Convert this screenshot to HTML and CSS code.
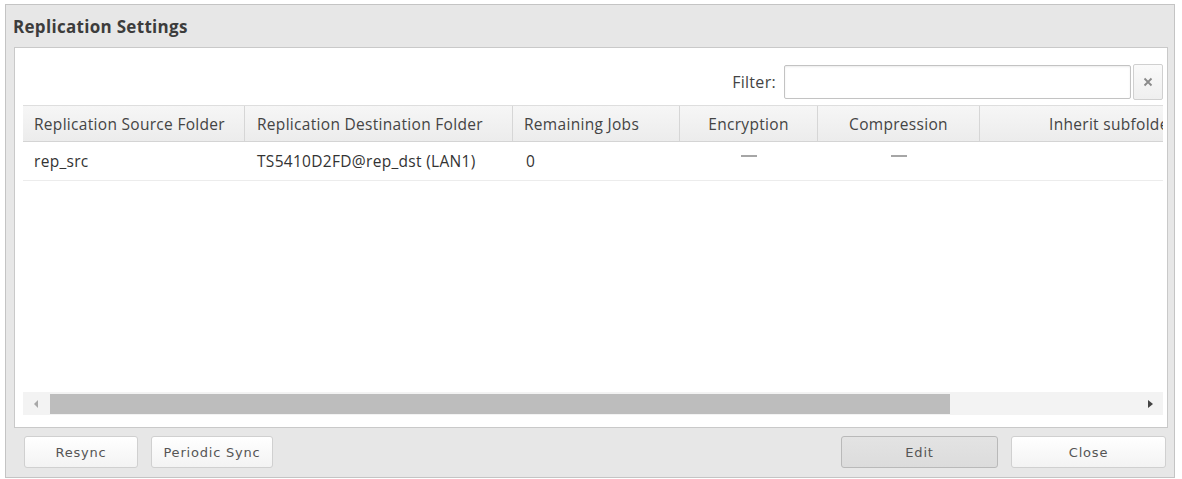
FILE: index.html
```html
<!DOCTYPE html>
<html>
<head>
<meta charset="utf-8">
<link rel="stylesheet" href="styles.css">
</head>
<body>
<div class="window">
  <div class="title">Replication Settings</div>
  <div class="panel">
    <div class="filter-row">
      <span class="filter-label">Filter:</span>
      <input class="filter-input" type="text">
      <button class="clear-btn"><svg width="10" height="10" viewBox="0 0 10 10"><path d="M1.5 1.5 L8.5 8.5 M8.5 1.5 L1.5 8.5" stroke="#8a8a8a" stroke-width="1.8" fill="none"/></svg></button>
    </div>
    <div class="grid">
      <div class="head">
        <div class="hc c1">Replication Source Folder</div>
        <div class="hc c2">Replication Destination Folder</div>
        <div class="hc c3">Remaining Jobs</div>
        <div class="hc c4 center">Encryption</div>
        <div class="hc c5 center">Compression</div>
        <div class="hc c6 last">Inherit subfolders</div>
      </div>
      <div class="row">
        <div class="cell c1">rep_src</div>
        <div class="cell c2">TS5410D2FD@rep_dst (LAN1)</div>
        <div class="cell c3">0</div>
        <div class="cell c4 center"><span class="dash"></span></div>
        <div class="cell c5 center"><span class="dash"></span></div>
        <div class="cell c6"></div>
      </div>
      <div class="body-space"></div>
      <div class="hscroll">
        <span class="arrow left"></span>
        <div class="track"><div class="thumb"></div></div>
        <span class="arrow right"></span>
      </div>
    </div>
  </div>
  <div class="buttons">
    <button class="btn resync">Resync</button>
    <button class="btn periodic">Periodic Sync</button>
    <span class="spacer"></span>
    <button class="btn edit">Edit</button>
    <button class="btn close">Close</button>
  </div>
</div>
</body>
</html>
```

FILE: styles.css
```css
* { box-sizing: border-box; }
html, body { margin: 0; padding: 0; background: #ffffff; }
body { font-family: "Open Sans", "Liberation Sans", Arial, sans-serif; color: #3a3a3a; }

.window {
  margin: 4px 0 0 5px;
  width: 1170px;
  height: 474px;
  border: 1px solid #c4c4c4;
  background: #e7e7e7;
  display: flex;
  flex-direction: column;
}

.title {
  height: 42px;
  padding-left: 7px;
  display: flex;
  align-items: center;
  font-weight: bold;
  font-size: 17px;
  color: #3c3c3c;
  letter-spacing: 0.3px;
}

.panel {
  margin: 0 6px 0 8px;
  height: 381px;
  background: #ffffff;
  border: 1px solid #c9c9c9;
  display: flex;
  flex-direction: column;
  padding: 16px 4px 12px 8px;
}

.filter-row {
  display: flex;
  justify-content: flex-end;
  align-items: center;
  height: 36px;
  margin-bottom: 5px;
}
.filter-label {
  font-size: 16px;
  letter-spacing: 0.3px;
  color: #444;
  margin-right: 8px;
}
.filter-input {
  width: 347px;
  height: 34px;
  border: 1px solid #c3c3c3;
  border-radius: 2px;
  box-shadow: inset 0 1px 2px rgba(0,0,0,0.08);
  background: #fff;
  margin: 0;
}
.clear-btn {
  width: 30px;
  height: 36px;
  margin-left: 2px;
  border: 1px solid #d0d0d0;
  border-radius: 2px;
  background: linear-gradient(#fafafa, #efefef);
  padding: 0;
  display: flex;
  align-items: center;
  justify-content: center;
}

.grid {
  flex: 1;
  display: flex;
  flex-direction: column;
  overflow: hidden;
}
.head, .row {
  display: flex;
  font-size: 15.5px;
  letter-spacing: 0.3px;
}
.head {
  height: 37px;
  background: linear-gradient(#f6f6f6, #ececec);
  border-top: 1px solid #dedede;
  border-bottom: 1px solid #d4d4d4;
}
.hc {
  display: flex;
  align-items: center;
  padding-left: 11px;
  border-right: 1px solid #d6d6d6;
  color: #444;
  white-space: nowrap;
  overflow: hidden;
}
.hc.c2, .cell.c2 { padding-left: 12px; }
.hc.c3 { padding-left: 11px; }
.center { justify-content: center; padding-left: 0 !important; }
.hc.last { border-right: none; padding-left: 69px; }

.c1 { width: 222px; flex: none; }
.c2 { width: 268px; flex: none; }
.c3 { width: 167px; flex: none; }
.c4 { width: 138px; flex: none; }
.c5 { width: 162px; flex: none; }
.c6 { width: 183px; flex: none; }

.row {
  height: 39px;
  border-bottom: 1px solid #ececec;
}
.cell {
  display: flex;
  align-items: center;
  padding-left: 11px;
  color: #333;
  white-space: nowrap;
}
.cell.c3 { padding-left: 13px; }
.dash {
  display: block;
  width: 16px;
  height: 2px;
  background: #a6a6a6;
  margin-bottom: 10px;
}

.body-space { flex: 1; }

.hscroll {
  height: 23px;
  display: flex;
  align-items: center;
  background: #f3f3f3;
}
.track {
  flex: 1;
  height: 21px;
  display: flex;
  align-items: center;
}
.thumb {
  margin-left: 2px;
  width: 900px;
  height: 20px;
  background: #bdbdbd;
}
.arrow {
  width: 25px;
  height: 21px;
  display: flex;
  align-items: center;
  justify-content: center;
  flex: none;
}
.arrow::before {
  content: "";
  width: 0;
  height: 0;
  border-top: 4px solid transparent;
  border-bottom: 4px solid transparent;
}
.arrow.left::before { border-right: 4px solid #a8a8a8; }
.arrow.right::before { border-left: 5px solid #444; }

.buttons {
  display: flex;
  align-items: center;
  padding: 8px 8px 0 18px;
  gap: 13px;
}
.spacer { flex: 1; }
.btn {
  height: 32px;
  border: 1px solid #d0d0d0;
  border-radius: 3px;
  background: linear-gradient(#ffffff, #f3f3f3);
  font-family: "DejaVu Sans", Verdana, sans-serif;
  font-size: 13px;
  letter-spacing: 0.8px;
  color: #555;
  padding: 0;
  margin: 0;
}
.resync { width: 114px; }
.periodic { width: 122px; }
.edit {
  width: 157px;
  background: linear-gradient(#e3e3e3, #dcdcdc);
  border-color: #b9b9b9;
}
.close { width: 155px; }
```
